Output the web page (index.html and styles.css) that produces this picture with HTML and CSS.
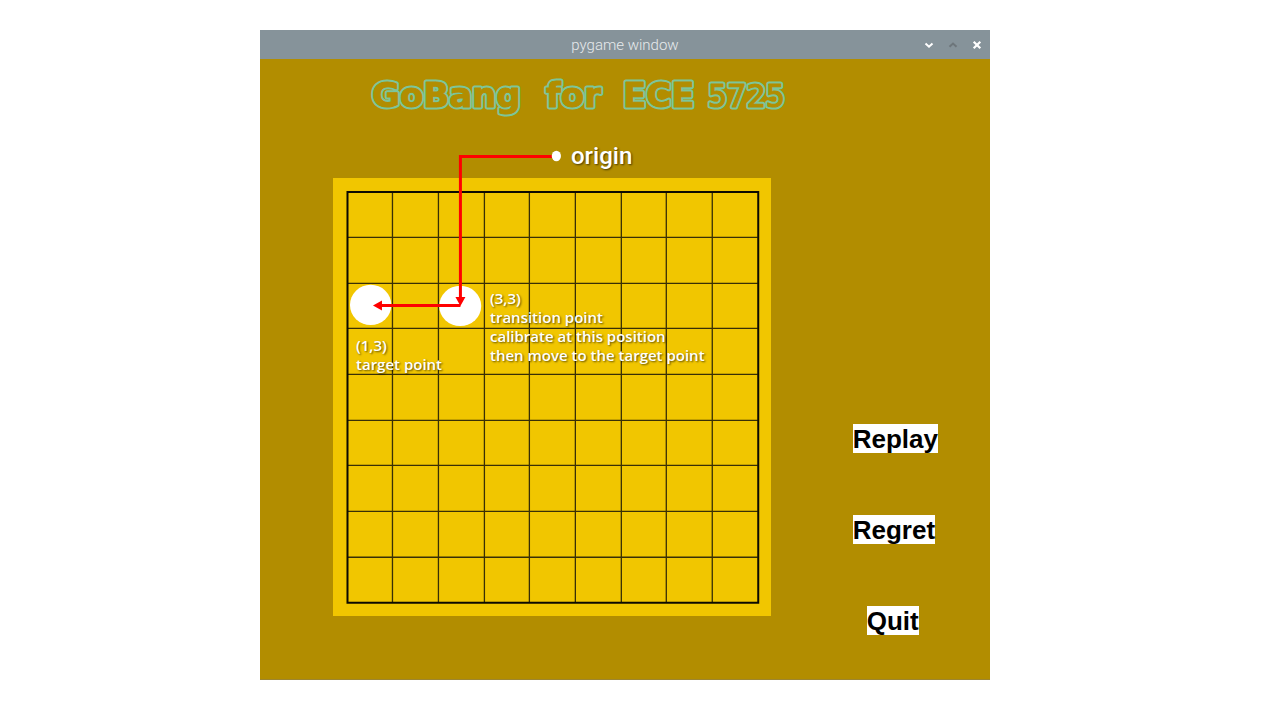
FILE: index.html
```html
<!DOCTYPE html>
<html lang="en">
<head>
<meta charset="utf-8">
<title>pygame window</title>
<link rel="stylesheet" href="styles.css">
</head>
<body>
<main class="window">
  <header class="titlebar">
    <span class="caption">pygame window</span>
    <div class="controls">
      <button class="control" aria-label="Minimize"><svg width="10" height="10" viewBox="0 0 10 10"><path d="M1.5 3.5 5 6.7 8.5 3.5" fill="none" stroke="#fff" stroke-width="2"/></svg></button>
      <button class="control" aria-label="Maximize" disabled><svg width="10" height="10" viewBox="0 0 10 10"><path d="M1.5 6.7 5 3.5 8.5 6.7" fill="none" stroke="#6d767b" stroke-width="2"/></svg></button>
      <button class="control" aria-label="Close"><svg width="10" height="10" viewBox="0 0 10 10"><path d="M1.7 1.7 8.3 8.3M8.3 1.7 1.7 8.3" fill="none" stroke="#fff" stroke-width="2.2"/></svg></button>
    </div>
  </header>
  <h1 class="heading">
    <svg class="lettering" width="430" height="40" viewBox="0 0 430 40">
      <g class="outline">
        <g id="words">
          <text x="0" y="32">GoBang</text>
          <text x="174" y="32">for</text>
          <text x="251" y="32">ECE</text>
          <text x="336" y="32" class="digits">5725</text>
        </g>
      </g>
      <use href="#words" class="inside"/>
    </svg>
  </h1>
  <div class="play">
    <div class="board">
      <svg class="grid" viewBox="0 0 438 438" aria-hidden="true">
        <path d="M59.5 14V425M105.5 14V425M151.5 14V425M196.5 14V425M242.5 14V425M288.5 14V425M333.5 14V425M379.5 14V425M14 59.5H425M14 105.5H425M14 150.5H425M14 196.5H425M14 242.5H425M14 287.5H425M14 333.5H425M14 379.5H425" stroke="#382f06" stroke-width="1.3"/>
        <rect x="14.5" y="14" width="411" height="411" fill="none" stroke="#0c0a02" stroke-width="2"/>
        <ellipse cx="37.7" cy="127" rx="20.7" ry="20.2" fill="#fff"/>
        <ellipse cx="127.3" cy="128" rx="21" ry="20.2" fill="#fff"/>
        <path d="M219-21.5H127.5V122M127.5 127.5H46" fill="none" stroke="#f00" stroke-width="3"/>
        <path d="M122.5 119H132.5L127.5 128ZM49 122.5V132.5L40 127.5Z" fill="#f00"/>
        <ellipse cx="223.5" cy="-22" rx="4.6" ry="5.2" fill="#fff"/>
      </svg>
      <p class="note origin">origin</p>
      <p class="note target">(1,3)<br>target point</p>
      <p class="note transition">(3,3)<br>transition point<br>calibrate at this position<br>then move to the target point</p>
    </div>
    <nav class="actions">
      <button class="action">Replay</button>
      <button class="action">Regret</button>
      <button class="action quit">Quit</button>
    </nav>
  </div>
</main>
</body>
</html>
```
FILE: styles.css
```css
body {
  margin: 0;
  background: #fff;
  font-family: "Liberation Sans", Arial, sans-serif;
}
.window {
  max-width: 730px;
  margin: 30px 0 0 260px;
  background: #b28d00;
  border-bottom: 1px solid #9c8530;
  box-sizing: border-box;
}
.titlebar {
  display: grid;
  grid-template-columns: 1fr auto 1fr;
  align-items: center;
  height: 29px;
  background: #86939a;
}
.caption {
  grid-column: 2;
  padding-top: 2px;
  font: 300 15px/27px Roboto, sans-serif;
  color: #e6eaec;
}
.controls {
  display: flex;
  justify-content: flex-end;
  gap: 14px;
  padding-right: 8px;
}
.control {
  display: flex;
  padding: 0;
  border: 0;
  background: none;
}
.heading {
  margin: 0;
  padding: 16px 0 0 112px;
  font: 700 34px/40px "DejaVu Sans", sans-serif;
}
.lettering {
  display: block;
  overflow: visible;
}
.outline {
  stroke: #7cc69a;
  stroke-width: 5px;
  stroke-linejoin: round;
}
.inside {
  fill: #b28d00;
  stroke: #b28d00;
  stroke-width: 1px;
  stroke-linejoin: round;
}
.digits {
  font-family: "DejaVu Sans Mono", monospace;
  font-size: 32px;
  font-weight: 400;
}
.play {
  display: flex;
  align-items: flex-start;
  gap: 82px;
  padding: 63px 52px 0 73px;
}
.board {
  position: relative;
  flex: 0 1 438px;
  margin-bottom: 63px;
  background: #f1c600;
}
.grid {
  display: block;
  width: 100%;
  overflow: visible;
}
.note {
  position: absolute;
  margin: 0;
  color: #fff;
  font: 600 15px/19px "Open Sans", sans-serif;
  text-shadow: 1px 1px 2px rgba(0, 0, 0, 0.6);
  white-space: nowrap;
}
.origin {
  left: 238px;
  top: -38px;
  font: 500 24px/32px Roboto, sans-serif;
}
.target {
  left: 23px;
  top: 158px;
}
.transition {
  left: 157px;
  top: 111px;
}
.actions {
  display: flex;
  flex-direction: column;
  align-items: flex-start;
  gap: 62px;
  padding-top: 246px;
}
.action {
  padding: 1px 0 0;
  border: 0;
  background: #fff;
  color: #000;
  font: 700 26px/28px "Liberation Sans", Arial, sans-serif;
}
.quit {
  margin-left: 14px;
}
```
